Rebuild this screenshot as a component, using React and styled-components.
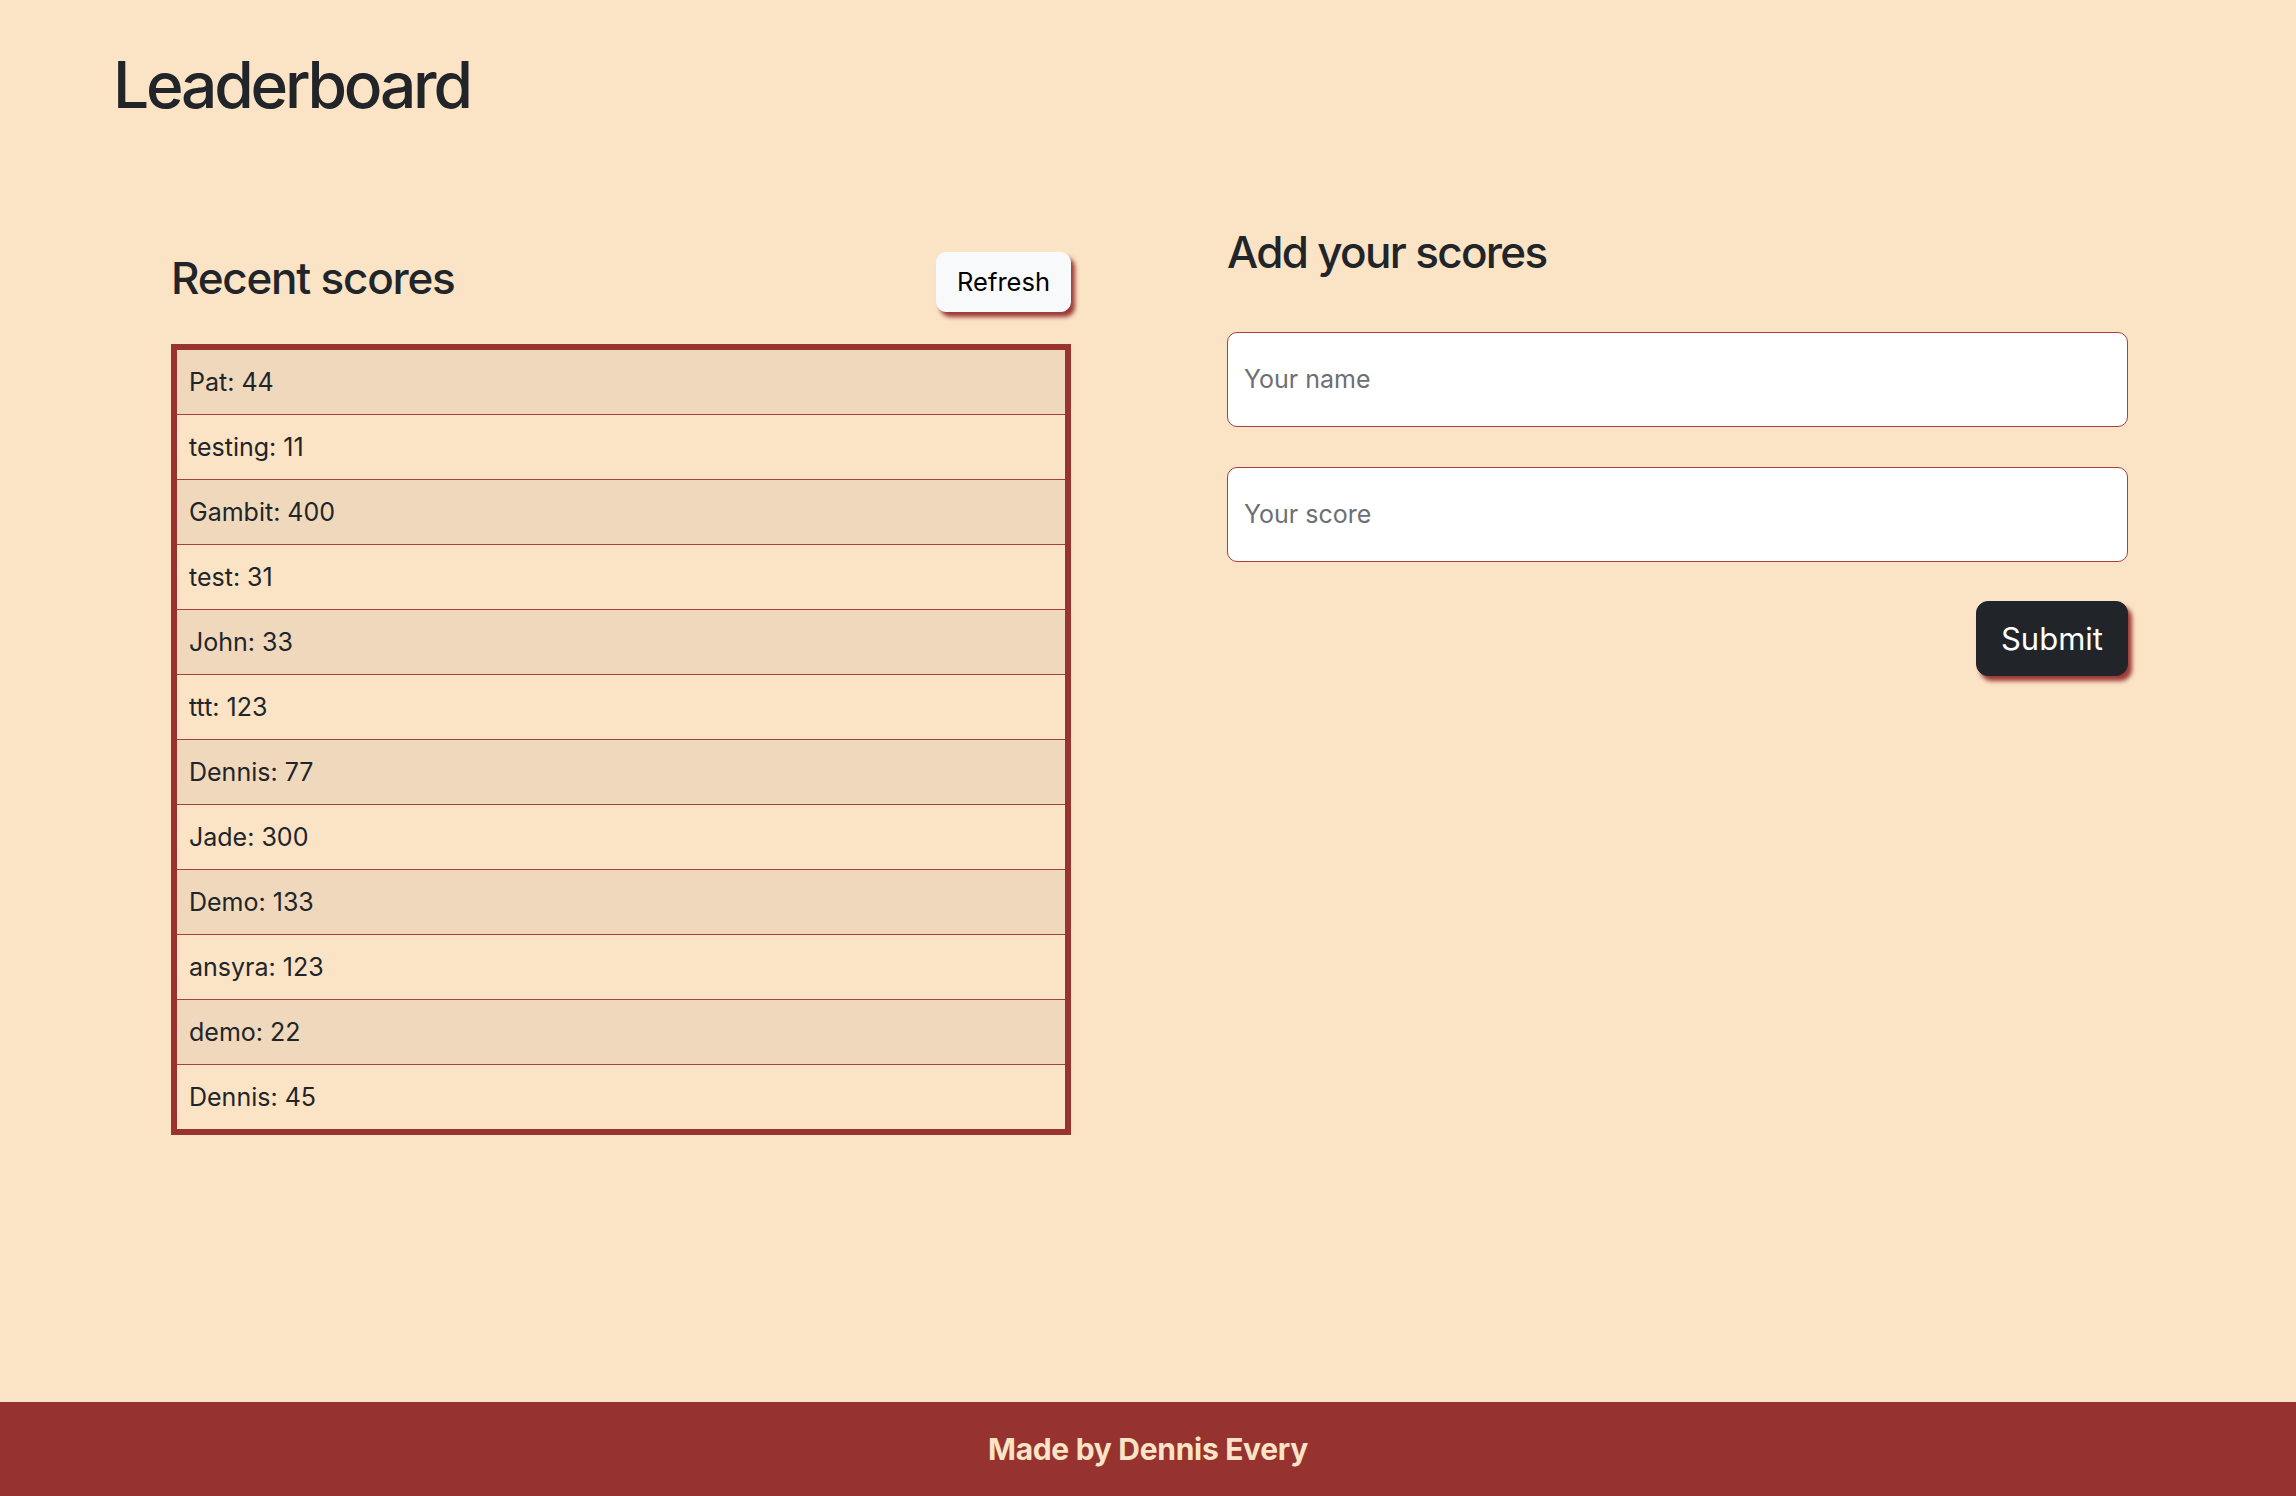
import React from "react";
import styled, { createGlobalStyle } from "styled-components";

const GlobalStyle = createGlobalStyle`
  html, body {
    margin: 0;
    padding: 0;
    background: #fbe3c6;
    font-family: Inter, "Noto Sans", "Liberation Sans", sans-serif;
    color: #212529;
  }
  * { box-sizing: border-box; }
`;

const Page = styled.div`
  min-height: 100vh;
  display: flex;
  flex-direction: column;
`;

const Main = styled.main`
  flex: 1;
  padding: 0 113px;
`;

const Title = styled.h1`
  margin: 47px 0 0;
  font-size: 64px;
  font-weight: 500;
  line-height: 1.2;
  letter-spacing: -0.05em;
`;

const Columns = styled.div`
  display: grid;
  grid-template-columns: 900px 901px;
  column-gap: 156px;
  margin-top: 102px;
  padding-left: 58px;
  align-items: start;
`;

const Column = styled.section`
  display: flex;
  flex-direction: column;
  padding-top: ${(p) => p.$offset || 0}px;
`;

const HeaderRow = styled.div`
  display: flex;
  justify-content: space-between;
  align-items: flex-start;
`;

const SectionTitle = styled.h3`
  margin: 0;
  font-size: 44px;
  font-weight: 500;
  line-height: 1.2;
  letter-spacing: ${(p) => p.$tracking || "-0.03em"};
`;

const ShadowButton = styled.button`
  font-family: inherit;
  border: 1px solid ${(p) => (p.$dark ? "#212529" : "#f8f9fa")};
  background: ${(p) => (p.$dark ? "#212529" : "#f8f9fa")};
  color: ${(p) => (p.$dark ? "#ffffff" : "#000000")};
  font-size: ${(p) => (p.$dark ? 31 : 25.5)}px;
  height: ${(p) => (p.$dark ? 75 : 60)}px;
  padding: 0 ${(p) => (p.$dark ? 24 : 20)}px;
  border-radius: ${(p) => (p.$dark ? 12 : 10)}px;
  box-shadow: 4px 5px 4px rgba(150, 50, 47, 0.95);
  cursor: pointer;
`;

const ScoreBox = styled.ul`
  list-style: none;
  margin: 32px 0 0;
  padding: 0;
  border: 6px solid #993330;
`;

const ScoreRow = styled.li`
  height: ${(p) => (p.$last ? 64 : 65)}px;
  display: flex;
  align-items: center;
  padding: 0 12px;
  font-size: 25px;
  color: #212529;
  background: ${(p) => (p.$shaded ? "#efd8bc" : "#fbe3c6")};
  border-bottom: ${(p) => (p.$last ? "none" : "1px solid #a8403b")};
`;

const Input = styled.input`
  display: block;
  width: 100%;
  height: 95px;
  margin-top: ${(p) => p.$gap}px;
  padding: 0 16px;
  font-family: inherit;
  font-size: 25px;
  color: #212529;
  background: #ffffff;
  border: 1px solid #a8403b;
  border-radius: 10px;
  outline: none;
  &::placeholder {
    color: #6c6f73;
  }
`;

const Actions = styled.div`
  display: flex;
  justify-content: flex-end;
  margin-top: 39px;
`;

const Footer = styled.footer`
  height: 94px;
  background: #963330;
  display: flex;
  align-items: center;
  justify-content: center;
  color: #fbe3c6;
  font-size: 30px;
  font-weight: 700;
  letter-spacing: -0.01em;
`;

const scores = [
  "Pat: 44",
  "testing: 11",
  "Gambit: 400",
  "test: 31",
  "John: 33",
  "ttt: 123",
  "Dennis: 77",
  "Jade: 300",
  "Demo: 133",
  "ansyra: 123",
  "demo: 22",
  "Dennis: 45",
];

export default function App() {
  return (
    <Page>
      <GlobalStyle />
      <Main>
        <Title>Leaderboard</Title>
        <Columns>
          <Column $offset={26}>
            <HeaderRow>
              <SectionTitle $tracking="-0.028em">Recent scores</SectionTitle>
              <ShadowButton type="button">Refresh</ShadowButton>
            </HeaderRow>
            <ScoreBox>
              {scores.map((s, i) => (
                <ScoreRow key={i} $shaded={i % 2 === 0} $last={i === scores.length - 1}>
                  {s}
                </ScoreRow>
              ))}
            </ScoreBox>
          </Column>
          <Column>
            <SectionTitle $tracking="-0.038em">Add your scores</SectionTitle>
            <Input $gap={53} placeholder="Your name" />
            <Input $gap={40} placeholder="Your score" />
            <Actions>
              <ShadowButton type="button" $dark>
                Submit
              </ShadowButton>
            </Actions>
          </Column>
        </Columns>
      </Main>
      <Footer>Made by Dennis Every</Footer>
    </Page>
  );
}
